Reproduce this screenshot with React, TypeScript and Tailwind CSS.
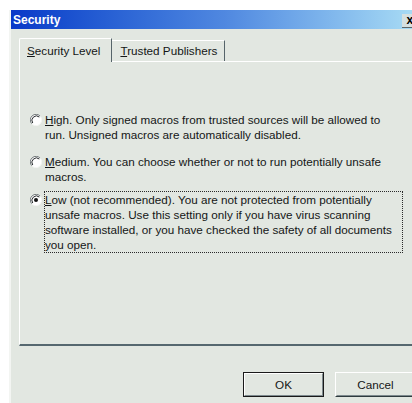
import React from "react";

const font = "font-['Liberation_Sans',Arial,sans-serif]";

function Radio({ checked = false }: { checked?: boolean }) {
	return (
		<svg width="12" height="12" viewBox="0 0 12 12" className="shrink-0">
			<circle cx="6" cy="6" r="5.5" fill="#ffffff" />
			<path d="M10.2 2.2 A5.5 5.5 0 0 0 1.8 9.8" fill="none" stroke="#6f7578" strokeWidth="1" />
			<path d="M9.3 3 A4.5 4.5 0 0 0 2.7 9" fill="none" stroke="#262a2c" strokeWidth="1" />
			<path d="M1.8 9.8 A5.5 5.5 0 0 0 10.2 2.2" fill="none" stroke="#f4f6f3" strokeWidth="1" />
			{checked && <circle cx="6" cy="6" r="2" fill="#111111" />}
		</svg>
	);
}

function Option({
	lines,
	checked = false,
	focused = false,
	className = "",
}: {
	lines: React.ReactNode[];
	checked?: boolean;
	focused?: boolean;
	className?: string;
}) {
	return (
		<div className={`flex items-start ${className}`}>
			<div className="w-[14px] ml-[10px] h-[17px] flex items-center">
				<Radio checked={checked} />
			</div>
			<div
				className={`border ${
					focused ? "border-dotted border-[#2a2a2a] w-[359px]" : "border-transparent"
				}`}
			>
				{lines.map((line, i) => (
					<div key={i} className="leading-[15px] whitespace-nowrap">
						{line}
					</div>
				))}
			</div>
		</div>
	);
}

export default function App() {
	return (
		<div className={`w-[412px] h-[403px] bg-white overflow-hidden pt-[10px] pl-[9px] ${font}`}>
			<div className="w-[430px] h-[420px] bg-[#e2e7e1] border-l-2 border-[#f3f5f2] flex flex-col text-[11.7px] text-[#141616]">
				{/* title bar */}
				<div className="h-[19px] flex items-center bg-gradient-to-r from-[#0a38c8] via-[#5088e0] to-[#b4e6f6] pl-[2px]">
					<span className="text-white font-bold text-[12px]">Security</span>
					<div className="ml-[342px] mt-[2px] w-[16px] h-[14px] bg-[#d6e0e0] border-b border-r border-[#5b6568] flex items-center justify-center text-[12px] font-bold leading-none text-black">
						x
					</div>
				</div>

				{/* tabs */}
				<div className="flex items-end ml-[8px] mt-[9px] h-[23px] relative z-10">
					<div className="h-[24px] -mb-px flex items-center pl-[7px] pr-[11px] bg-[#e2e7e1] border-l border-t border-r border-l-white border-t-white border-r-[#56646a] rounded-tl-[2px]">
						<span>
							<span className="underline">S</span>ecurity Level
						</span>
					</div>
					<div className="h-[21px] flex items-center pl-[8px] pr-[7px] border-t border-r border-t-white border-r-[#56646a]">
						<span>
							<span className="underline">T</span>rusted Publishers
						</span>
					</div>
				</div>

				{/* tab panel */}
				<div className="ml-[8px] h-[285px] border-t border-l border-b-2 border-t-white border-l-white border-b-[#56686f] pt-[49px]">
					<Option
						lines={[
							<>
								<span className="underline">H</span>igh. Only signed macros from trusted sources will be allowed to
							</>,
							"run. Unsigned macros are automatically disabled.",
						]}
					/>
					<Option
						className="mt-[10px]"
						lines={[
							<>
								<span className="underline">M</span>edium. You can choose whether or not to run potentially unsafe
							</>,
							"macros.",
						]}
					/>
					<Option
						className="mt-[6px]"
						checked
						focused
						lines={[
							<>
								<span className="underline">L</span>ow (not recommended). You are not protected from potentially
							</>,
							"unsafe macros. Use this setting only if you have virus scanning",
							"software installed, or you have checked the safety of all documents",
							"you open.",
						]}
					/>
				</div>

				{/* buttons */}
				<div className="flex gap-[11px] pl-[232px] mt-[26px]">
					<button className="w-[81px] h-[25px] border border-[#1a1a1a] bg-[#e2e7e1] flex items-center justify-center">
						<span className="w-full h-full border border-t-white border-l-white border-b-[#7e8a8e] border-r-[#7e8a8e] flex items-center justify-center">
							OK
						</span>
					</button>
					<button className="w-[81px] h-[25px] border border-t-white border-l-white border-b-[#2f3a3e] border-r-[#2f3a3e] bg-[#e2e7e1] flex items-center justify-center">
						<span className="w-full h-full border border-t-transparent border-l-transparent border-b-[#7e8a8e] border-r-[#7e8a8e] flex items-center justify-center">
							Cancel
						</span>
					</button>
				</div>
			</div>
		</div>
	);
}
